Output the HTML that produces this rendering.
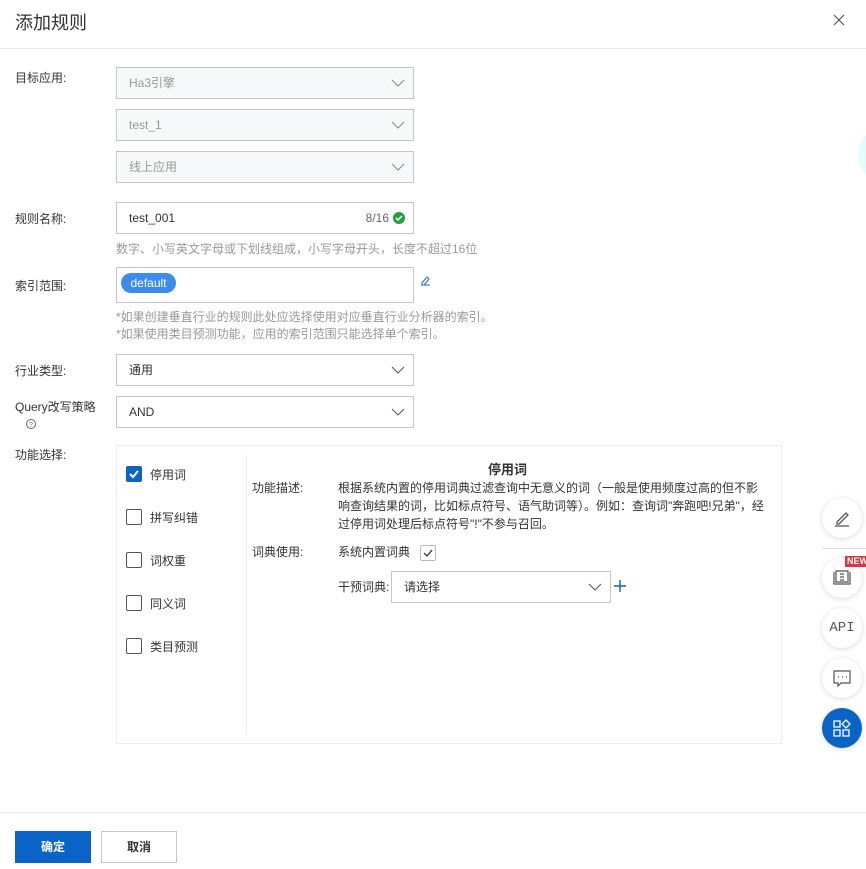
<!DOCTYPE html>
<html><head><meta charset="utf-8"><style>
*{box-sizing:border-box;margin:0;padding:0}
body{width:866px;height:869px;background:#fff;font-family:"Liberation Sans","Noto Sans CJK SC",sans-serif;font-size:12px;color:#333;position:relative;overflow:hidden}
.a{position:absolute}
.sel{position:absolute;left:116px;width:298px;height:32px;border:1px solid #c4c6cf;padding:0 12px;line-height:30px;font-size:12px}
.dis{background:#f7f8fa;color:#999}
.arr{position:absolute;right:8px;top:10px;width:14px;height:10px}
.lbl{position:absolute;left:15px;font-size:12px;color:#333}
.cb{position:absolute;width:16px;height:16px;border:1px solid #555;border-radius:2px;background:#fff}
.cbt{position:absolute;left:150px;font-size:12px}
.fb{position:absolute;left:822px;width:40px;height:40px;border-radius:50%;background:#fff;box-shadow:0 1px 6px rgba(0,0,0,.15)}
</style></head><body>
<div class="a" style="left:15px;top:9px;font-size:18px;color:#333">添加规则</div>
<svg class="a" style="left:833px;top:14px" width="12" height="12"><path d="M1 1L11 11M11 1L1 11" stroke="#555" stroke-width="1.2"/></svg>
<div class="a" style="left:0;top:48px;width:866px;height:1px;background:#e8e8e8"></div>
<div class="a" style="left:858px;top:130px;width:40px;height:50px;border-radius:50%;background:#e6fbfb"></div>

<div class="lbl" style="top:69px">目标应用:</div>
<div class="sel dis" style="top:67px">Ha3引擎<svg class="arr" viewBox="0 0 14 10"><path d="M1 2l6 6 6-6" fill="none" stroke="#888"/></svg></div>
<div class="sel dis" style="top:109px">test_1<svg class="arr" viewBox="0 0 14 10"><path d="M1 2l6 6 6-6" fill="none" stroke="#888"/></svg></div>
<div class="sel dis" style="top:151px">线上应用<svg class="arr" viewBox="0 0 14 10"><path d="M1 2l6 6 6-6" fill="none" stroke="#888"/></svg></div>

<div class="lbl" style="top:210px">规则名称:</div>
<div class="sel" style="top:202px;color:#333">test_001<span class="a" style="right:24px;top:0;color:#666">8/16</span><svg class="a" style="right:8px;top:9px" width="12" height="12"><circle cx="6" cy="6" r="6" fill="#1fa03a"/><path d="M3 6l2 2 4-4" stroke="#fff" stroke-width="1.6" fill="none"/></svg></div>
<div class="a" style="left:116px;top:240px;color:#999">数字、小写英文字母或下划线组成，小写字母开头，长度不超过16位</div>

<div class="lbl" style="top:277px">索引范围:</div>
<div class="a" style="left:116px;top:267px;width:298px;height:36px;border:1px solid #c4c6cf"></div>
<div class="a" style="left:121px;top:273px;width:55px;height:20px;border-radius:10px;background:#3c8cf0;color:#fff;text-align:center;line-height:20px">default</div>
<svg class="a" style="left:420px;top:275px" width="11" height="11"><path d="M2 8L7 2l2 2-5 6H2z M1 10h9" fill="none" stroke="#2a66c8"/></svg>
<div class="a" style="left:116px;top:309px;color:#999;line-height:17px">*如果创建垂直行业的规则此处应选择使用对应垂直行业分析器的索引。<br>*如果使用类目预测功能，应用的索引范围只能选择单个索引。</div>

<div class="lbl" style="top:362px">行业类型:</div>
<div class="sel" style="top:354px">通用<svg class="arr" viewBox="0 0 14 10"><path d="M1 2l6 6 6-6" fill="none" stroke="#555"/></svg></div>
<div class="lbl" style="top:398px">Query改写策略</div>
<svg class="a" style="left:26px;top:419px" width="10" height="10"><circle cx="5" cy="5" r="4.5" fill="none" stroke="#666"/><text x="5" y="8" font-size="7" text-anchor="middle" fill="#666">?</text></svg>
<div class="sel" style="top:396px">AND<svg class="arr" viewBox="0 0 14 10"><path d="M1 2l6 6 6-6" fill="none" stroke="#555"/></svg></div>

<div class="lbl" style="top:446px">功能选择:</div>
<div class="a" style="left:116px;top:445px;width:666px;height:299px;border:1px solid #eee"></div>
<div class="a" style="left:246px;top:455px;width:1px;height:280px;background:#eee"></div>
<div class="cb" style="left:126px;top:466px;background:#0a64c8;border-color:#0a64c8"><svg width="14" height="14" style="position:absolute;left:0;top:0"><path d="M3 7l3 3 5-6" stroke="#fff" stroke-width="2" fill="none"/></svg></div>
<div class="cbt" style="top:466px">停用词</div>
<div class="cb" style="left:126px;top:509px"></div><div class="cbt" style="top:509px">拼写纠错</div>
<div class="cb" style="left:126px;top:552px"></div><div class="cbt" style="top:552px">词权重</div>
<div class="cb" style="left:126px;top:595px"></div><div class="cbt" style="top:595px">同义词</div>
<div class="cb" style="left:126px;top:638px"></div><div class="cbt" style="top:638px">类目预测</div>

<div class="a" style="left:488px;top:459px;font-size:13px;font-weight:bold">停用词</div>
<div class="a" style="left:252px;top:479px">功能描述:</div>
<div class="a" style="left:338px;top:479px;width:428px;line-height:18px">根据系统内置的停用词典过滤查询中无意义的词（一般是使用频度过高的但不影响查询结果的词，比如标点符号、语气助词等）。例如：查询词"奔跑吧!兄弟"，经过停用词处理后标点符号"!"不参与召回。</div>
<div class="a" style="left:252px;top:543px">词典使用:</div>
<div class="a" style="left:338px;top:543px">系统内置词典</div>
<div class="cb" style="left:420px;top:545px;border-color:#bbb"><svg width="14" height="14" style="position:absolute;left:0;top:0"><path d="M3 7l3 3 5-6" stroke="#444" stroke-width="1.4" fill="none"/></svg></div>
<div class="a" style="left:338px;top:578px">干预词典:</div>
<div class="sel" style="left:391px;top:571px;width:220px">请选择<svg class="arr" viewBox="0 0 14 10"><path d="M1 2l6 6 6-6" fill="none" stroke="#555"/></svg></div>
<svg class="a" style="left:614px;top:580px" width="12" height="12"><path d="M6 0v12M0 6h12" stroke="#0a64c8" stroke-width="1.4"/></svg>

<div class="fb" style="top:498px"><svg width="40" height="40"><path d="M15 24l9-9 2 2-9 9h-2z M13 28h14" fill="none" stroke="#555" stroke-width="1.3"/></svg></div>
<div class="a" style="left:822px;top:548px;width:44px;height:1px;background:#ddd"></div>
<div class="fb" style="top:558px"><svg width="40" height="40"><path d="M12 14v12h16V14 M14 13h12v11H14z M18 16h4 M18 19h4 M18 22h4" fill="none" stroke="#555" stroke-width="1.2"/></svg></div>
<div class="a" style="left:845px;top:556px;background:#d9363e;color:#fff;font-size:9px;font-weight:bold;padding:0 2px;line-height:11px">NEW</div>
<div class="fb" style="top:608px"><div style="text-align:center;line-height:40px;font-size:14px;color:#555;font-family:'Liberation Mono',monospace">API</div></div>
<div class="fb" style="top:658px"><svg width="40" height="40"><path d="M12 13h16v12h-9l-3 3v-3h-4z" fill="none" stroke="#555" stroke-width="1.2"/><path d="M16 19h1M20 19h1M24 19h1" stroke="#555" stroke-width="1.5"/></svg></div>
<div class="fb" style="top:708px;background:#0a64c8"><svg width="40" height="40"><path d="M12 13h6v6h-6z M12 22h6v6h-6z M21 22h6v6h-6z M24 12l4 4-4 4-4-4z" fill="none" stroke="#fff" stroke-width="1.3"/></svg></div>

<div class="a" style="left:0;top:812px;width:866px;height:1px;background:#e8e8e8"></div>
<div class="a" style="left:15px;top:831px;width:76px;height:32px;background:#0a64c8;color:#fff;text-align:center;line-height:32px;font-weight:bold">确定</div>
<div class="a" style="left:101px;top:831px;width:76px;height:32px;border:1px solid #c4c6cf;text-align:center;line-height:30px;font-weight:bold">取消</div>
</body></html>
